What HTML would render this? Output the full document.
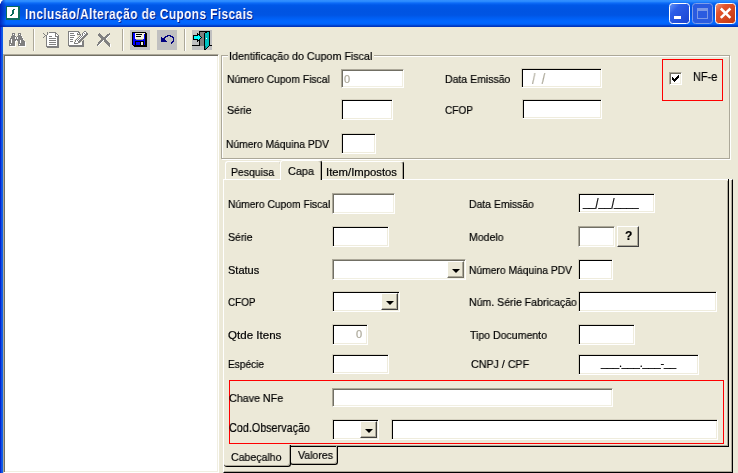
<!DOCTYPE html><html lang="pt-BR"><head><meta charset="utf-8"><title>Inclusão/Alteração de Cupons Fiscais</title><style>
*{box-sizing:border-box;margin:0;padding:0}
html,body{width:738px;height:473px;overflow:hidden;background:#ECE9D8}
body{position:relative;font-family:"Liberation Sans",sans-serif;font-size:11px;color:#000}
.abs,.l,.in,.dis,.btn,.cbb{position:absolute}
.l{will-change:transform;-webkit-text-stroke:0.2px currentColor;white-space:pre;line-height:14px;height:14px;transform-origin:0 0}
#tb{left:0;top:0;width:738px;height:27px;background:linear-gradient(to bottom,#3390ff 0%,#2c8cff 5%,#0d6cf8 11%,#0058e8 19%,#0054e2 40%,#0055e4 56%,#005ef2 66%,#0066ff 78%,#0066ff 86%,#005cf0 91%,#0040cc 95%,#0030b4 100%)}
#lb{left:0;top:27px;width:3px;height:446px;background:linear-gradient(to right,#0019cf 0,#0831d9 33%,#166aee 66%,#0855dd 100%)}
.in{background:#fff;border:1px solid;border-color:#d5d1c0 #fff #fff #d5d1c0;box-shadow:inset 1px 1px 0 #000,inset -1px -1px 0 #efecdd}
.dis{background:#fff;border:1px solid;border-color:#aca899 #fff #fff #aca899;box-shadow:inset 1px 1px 0 #716f64,inset -1px -1px 0 #f1efe2}
.cbb{background:#ECE9D8;border:1px solid;border-color:#fff #404040 #404040 #fff;box-shadow:inset -1px -1px 0 #aca899}
.cbb:after{content:"";position:absolute;left:50%;top:50%;margin:-1px 0 0 -4px;border:4px solid transparent;border-top-color:#000;border-bottom-width:0;width:0;height:0}
.tbtn{position:absolute;width:20px;height:20px;background:#c0c0c0}
.sep{position:absolute;top:29px;width:2px;height:22px;border-left:1px solid #aca899;border-right:1px solid #fff}
</style></head><body>
<div id="tb" class="abs"></div><div id="lb" class="abs"></div><div class="abs" style="left:0;top:0;width:6px;height:27px;background:linear-gradient(to right,rgba(0,20,170,.75),rgba(0,40,200,0))"></div>
<svg class="abs" style="left:0;top:0" width="4" height="4" viewBox="0 0 4 4" shape-rendering="crispEdges"><path d="M0 0h2v1h-1v2h-1z" fill="#fff"/><path d="M2 0h1v1h-1zM1 1h1v1h-1zM0 3h1v1h-1z" fill="#fff" opacity=".45"/></svg>
<svg class="abs" style="left:6px;top:6px" width="14" height="14" viewBox="0 0 14 14" shape-rendering="crispEdges"><rect width="14" height="14" fill="#0a6b5c"/><rect x="1" y="1" width="11" height="11" fill="#fff"/><path d="M7 3h2v1h-1v4h-1v1h-1v1h-2v-1h1v-1h1v-4h1z" fill="#0a6b5c"/></svg>
<svg class="abs" style="left:669px;top:3px" width="67" height="21" viewBox="0 0 67 21">
<defs><linearGradient id="gb" x1="0" y1="0" x2="1" y2="1"><stop offset="0" stop-color="#6a98f8"/><stop offset=".3" stop-color="#2c5ee8"/><stop offset="1" stop-color="#1a43d0"/></linearGradient>
<linearGradient id="gr" x1="0" y1="0" x2="1" y2="1"><stop offset="0" stop-color="#f09a80"/><stop offset=".3" stop-color="#e4532c"/><stop offset="1" stop-color="#c0360f"/></linearGradient></defs>
<rect x=".5" y=".5" width="20" height="20" rx="3" fill="url(#gb)" stroke="#fff"/>
<rect x="5" y="13" width="7" height="3" fill="#fff"/>
<rect x="23.5" y=".5" width="20" height="20" rx="3" fill="#2a5be0" stroke="#7f9fe8"/>
<rect x="28.5" y="6.5" width="10" height="9" fill="none" stroke="#7a98e6"/><rect x="28" y="5" width="11" height="3" fill="#7a98e6"/>
<rect x="46.5" y=".5" width="20" height="20" rx="3" fill="url(#gr)" stroke="#fff"/>
<path d="M51.8 5.5l9.600 9.400M61.400 5.500l-9.600 9.400" stroke="#fff" stroke-width="2.500"/>
</svg>
<div class="sep" style="left:33px"></div>
<div class="sep" style="left:122px"></div>
<div class="sep" style="left:184px"></div>
<div class="tbtn" style="left:130px;top:30px"></div><div class="tbtn" style="left:157px;top:30px"></div><div class="tbtn" style="left:192px;top:30px"></div>
<svg class="abs" style="left:9px;top:33px" width="17" height="14" viewBox="0 0 17 14" shape-rendering="crispEdges"><path fill="#808080" d="M3 0h3v1h-3zM9 0h3v1h-3zM3 1h1v1h-1zM5 1h1v1h-1zM9 1h1v1h-1zM11 1h1v1h-1zM3 2h3v1h-3zM9 2h3v1h-3zM2 3h5v1h-5zM8 3h5v1h-5zM2 4h4v1h-4zM7 4h1v1h-1zM9 4h4v1h-4zM1 5h5v1h-5zM7 5h1v1h-1zM9 5h5v1h-5zM1 6h1v1h-1zM3 6h11v1h-11zM0 7h2v1h-2zM3 7h4v1h-4zM8 7h3v1h-3zM12 7h3v1h-3zM0 8h2v1h-2zM3 8h3v1h-3zM9 8h2v1h-2zM12 8h4v1h-4zM0 9h2v1h-2zM3 9h3v1h-3zM9 9h2v1h-2zM12 9h4v1h-4zM0 10h6v1h-6zM9 10h7v1h-7zM0 11h1v1h-1zM2 11h4v1h-4zM9 11h1v1h-1zM11 11h5v1h-5zM0 12h6v1h-6zM9 12h7v1h-7z"/><path fill="#ffffff" d="M4 1h1v1h-1zM10 1h1v1h-1zM6 2h1v1h-1zM12 2h1v1h-1zM6 4h1v1h-1zM8 4h1v1h-1zM13 4h1v1h-1zM6 5h1v1h-1zM8 5h1v1h-1zM2 6h1v1h-1zM14 6h1v1h-1zM2 7h1v1h-1zM7 7h1v1h-1zM11 7h1v1h-1zM2 8h1v1h-1zM6 8h2v1h-2zM11 8h1v1h-1zM2 9h1v1h-1zM6 9h1v1h-1zM11 9h1v1h-1zM16 9h1v1h-1zM6 10h1v1h-1zM16 10h1v1h-1zM1 11h1v1h-1zM6 11h1v1h-1zM10 11h1v1h-1zM16 11h1v1h-1zM6 12h1v1h-1zM16 12h1v1h-1zM1 13h6v1h-6zM10 13h7v1h-7z"/></svg>
<svg class="abs" style="left:43px;top:32px" width="16" height="16" viewBox="0 0 16 16" shape-rendering="crispEdges"><path fill="#808080" d="M4 0h1v1h-1zM6 0h7v1h-7zM0 1h1v1h-1zM4 1h1v1h-1zM12 1h2v1h-2zM1 2h1v1h-1zM4 2h1v1h-1zM12 2h1v1h-1zM14 2h1v1h-1zM2 3h2v1h-2zM12 3h1v1h-1zM15 3h1v1h-1zM1 4h1v1h-1zM3 4h1v1h-1zM6 4h3v1h-3zM12 4h4v1h-4zM0 5h1v1h-1zM3 5h1v1h-1zM14 5h2v1h-2zM3 6h1v1h-1zM6 6h7v1h-7zM14 6h2v1h-2zM3 7h1v1h-1zM14 7h2v1h-2zM3 8h1v1h-1zM6 8h7v1h-7zM14 8h2v1h-2zM3 9h1v1h-1zM14 9h2v1h-2zM3 10h1v1h-1zM6 10h7v1h-7zM14 10h2v1h-2zM3 11h1v1h-1zM14 11h2v1h-2zM3 12h1v1h-1zM6 12h7v1h-7zM14 12h2v1h-2zM3 13h1v1h-1zM14 13h2v1h-2zM3 14h13v1h-13zM4 15h12v1h-12z"/><path fill="#ffffff" d="M6 1h6v1h-6zM5 2h7v1h-7zM13 2h1v1h-1zM4 3h8v1h-8zM13 3h2v1h-2zM4 4h2v1h-2zM9 4h3v1h-3zM4 5h10v1h-10zM4 6h2v1h-2zM13 6h1v1h-1zM4 7h10v1h-10zM4 8h2v1h-2zM13 8h1v1h-1zM4 9h10v1h-10zM4 10h2v1h-2zM13 10h1v1h-1zM4 11h10v1h-10zM4 12h2v1h-2zM13 12h1v1h-1zM4 13h10v1h-10z"/></svg>
<svg class="abs" style="left:68px;top:31px" width="21" height="16" viewBox="0 0 21 16" shape-rendering="crispEdges"><path fill="#808080" d="M0 0h11v1h-11zM16 0h2v1h-2zM0 1h1v1h-1zM10 1h2v1h-2zM15 1h1v1h-1zM18 1h1v1h-1zM0 2h1v1h-1zM2 2h4v1h-4zM9 2h1v1h-1zM11 2h1v1h-1zM14 2h1v1h-1zM16 2h1v1h-1zM18 2h2v1h-2zM0 3h1v1h-1zM9 3h4v1h-4zM14 3h1v1h-1zM17 3h3v1h-3zM0 4h1v1h-1zM2 4h5v1h-5zM12 4h1v1h-1zM14 4h1v1h-1zM16 4h3v1h-3zM0 5h1v1h-1zM11 5h1v1h-1zM13 5h1v1h-1zM15 5h3v1h-3zM0 6h1v1h-1zM2 6h4v1h-4zM10 6h1v1h-1zM12 6h1v1h-1zM14 6h3v1h-3zM0 7h1v1h-1zM9 7h1v1h-1zM11 7h1v1h-1zM13 7h3v1h-3zM0 8h1v1h-1zM2 8h3v1h-3zM8 8h1v1h-1zM10 8h1v1h-1zM12 8h3v1h-3zM0 9h1v1h-1zM7 9h1v1h-1zM9 9h1v1h-1zM11 9h3v1h-3zM15 9h1v1h-1zM0 10h1v1h-1zM2 10h3v1h-3zM7 10h1v1h-1zM10 10h3v1h-3zM14 10h2v1h-2zM0 11h1v1h-1zM6 11h1v1h-1zM10 11h2v1h-2zM14 11h2v1h-2zM0 12h1v1h-1zM6 12h4v1h-4zM14 12h2v1h-2zM0 13h1v1h-1zM14 13h2v1h-2zM0 14h16v1h-16zM1 15h15v1h-15z"/><path fill="#ffffff" d="M1 1h9v1h-9zM16 1h2v1h-2zM1 2h1v1h-1zM6 2h3v1h-3zM10 2h1v1h-1zM15 2h1v1h-1zM17 2h1v1h-1zM1 3h8v1h-8zM15 3h2v1h-2zM1 4h1v1h-1zM7 4h2v1h-2zM13 4h1v1h-1zM15 4h1v1h-1zM1 5h8v1h-8zM12 5h1v1h-1zM14 5h1v1h-1zM1 6h1v1h-1zM6 6h3v1h-3zM11 6h1v1h-1zM13 6h1v1h-1zM1 7h7v1h-7zM10 7h1v1h-1zM12 7h1v1h-1zM1 8h1v1h-1zM5 8h2v1h-2zM9 8h1v1h-1zM11 8h1v1h-1zM1 9h5v1h-5zM8 9h1v1h-1zM10 9h1v1h-1zM1 10h1v1h-1zM5 10h1v1h-1zM8 10h2v1h-2zM1 11h5v1h-5zM7 11h3v1h-3zM13 11h1v1h-1zM1 12h5v1h-5zM11 12h3v1h-3zM1 13h13v1h-13z"/></svg>
<svg class="abs" style="left:97px;top:33px" width="15" height="14" viewBox="0 0 15 14" shape-rendering="crispEdges"><path fill="#808080" d="M2 0h1v1h-1zM12 0h1v1h-1zM1 1h3v1h-3zM10 1h3v1h-3zM1 2h4v1h-4zM9 2h3v1h-3zM2 3h4v1h-4zM8 3h3v1h-3zM3 4h7v1h-7zM4 5h5v1h-5zM4 6h5v1h-5zM3 7h3v1h-3zM7 7h3v1h-3zM2 8h3v1h-3zM7 8h4v1h-4zM1 9h3v1h-3zM8 9h4v1h-4zM1 10h2v1h-2zM9 10h4v1h-4zM0 11h2v1h-2zM10 11h3v1h-3zM0 12h1v1h-1zM11 12h2v1h-2zM12 13h1v1h-1z"/><path fill="#ffffff" d="M12 2h1v1h-1zM11 3h1v1h-1zM10 4h1v1h-1zM9 5h1v1h-1zM6 7h1v1h-1zM5 8h1v1h-1zM4 9h1v1h-1zM3 10h1v1h-1zM2 11h1v1h-1zM13 11h1v1h-1zM1 12h1v1h-1zM13 12h1v1h-1zM13 13h1v1h-1z"/></svg>
<svg class="abs" style="left:132px;top:32px" width="15" height="15" viewBox="0 0 15 15" shape-rendering="crispEdges"><path fill="#000000" d="M0 0h14v1h-14zM0 1h1v1h-1zM13 1h2v1h-2zM0 2h1v1h-1zM4 2h6v1h-6zM13 2h2v1h-2zM0 3h1v1h-1zM13 3h2v1h-2zM0 4h1v1h-1zM4 4h5v1h-5zM13 4h2v1h-2zM0 5h1v1h-1zM13 5h2v1h-2zM0 6h1v1h-1zM13 6h2v1h-2zM0 7h1v1h-1zM13 7h2v1h-2zM0 8h1v1h-1zM13 8h2v1h-2zM0 9h1v1h-1zM3 9h9v1h-9zM13 9h2v1h-2zM0 10h1v1h-1zM3 10h1v1h-1zM8 10h1v1h-1zM11 10h1v1h-1zM13 10h2v1h-2zM0 11h1v1h-1zM3 11h1v1h-1zM8 11h1v1h-1zM11 11h1v1h-1zM13 11h2v1h-2zM0 12h1v1h-1zM3 12h1v1h-1zM8 12h1v1h-1zM11 12h1v1h-1zM13 12h2v1h-2zM1 13h14v1h-14zM2 14h13v1h-13z"/><path fill="#0000ff" d="M1 1h2v1h-2zM1 2h2v1h-2zM12 2h1v1h-1zM1 3h2v1h-2zM12 3h1v1h-1zM1 4h2v1h-2zM12 4h1v1h-1zM1 5h2v1h-2zM12 5h1v1h-1zM1 6h2v1h-2zM12 6h1v1h-1zM1 7h3v1h-3zM11 7h2v1h-2zM1 8h12v1h-12zM1 9h2v1h-2zM12 9h1v1h-1zM1 10h2v1h-2zM4 10h4v1h-4zM12 10h1v1h-1zM1 11h2v1h-2zM4 11h4v1h-4zM12 11h1v1h-1zM1 12h2v1h-2zM4 12h4v1h-4zM12 12h1v1h-1z"/><path fill="#f4f2e4" d="M3 1h9v1h-9zM3 2h1v1h-1zM10 2h2v1h-2zM3 3h9v1h-9zM3 4h1v1h-1zM9 4h3v1h-3zM3 5h9v1h-9zM3 6h9v1h-9z"/><path fill="#ffffff" d="M12 1h1v1h-1z"/><path fill="#a0a0a0" d="M4 7h7v1h-7z"/><path fill="#e8e8e8" d="M9 10h2v1h-2zM9 11h2v1h-2zM9 12h2v1h-2z"/></svg>
<svg class="abs" style="left:161px;top:35px" width="13" height="9" viewBox="0 0 13 9" shape-rendering="crispEdges"><path fill="#000080" d="M6 0h4v1h-4zM4 1h3v1h-3zM9 1h3v1h-3zM0 2h1v1h-1zM3 2h2v1h-2zM11 2h2v1h-2zM0 3h4v1h-4zM12 3h1v1h-1zM0 4h4v1h-4zM12 4h1v1h-1zM0 5h5v1h-5zM12 5h1v1h-1zM0 6h6v1h-6zM11 6h2v1h-2zM10 7h2v1h-2zM10 8h1v1h-1z"/></svg>
<svg class="abs" style="left:192px;top:30px" width="20" height="20" viewBox="0 0 20 20" shape-rendering="crispEdges"><path fill="#000000" d="M7 1h11v1h-11zM7 2h1v1h-1zM13 2h2v1h-2zM17 2h1v1h-1zM5 3h1v1h-1zM7 3h1v1h-1zM12 3h1v1h-1zM17 3h1v1h-1zM5 4h3v1h-3zM12 4h1v1h-1zM17 4h1v1h-1zM1 5h5v1h-5zM7 5h1v1h-1zM12 5h1v1h-1zM17 5h1v1h-1zM1 6h1v1h-1zM8 6h1v1h-1zM12 6h1v1h-1zM17 6h1v1h-1zM1 7h1v1h-1zM9 7h1v1h-1zM12 7h1v1h-1zM17 7h1v1h-1zM1 8h1v1h-1zM8 8h1v1h-1zM12 8h1v1h-1zM17 8h1v1h-1zM1 9h5v1h-5zM7 9h1v1h-1zM12 9h1v1h-1zM17 9h1v1h-1zM5 10h3v1h-3zM12 10h1v1h-1zM17 10h1v1h-1zM5 11h1v1h-1zM7 11h1v1h-1zM12 11h1v1h-1zM17 11h1v1h-1zM7 12h1v1h-1zM12 12h1v1h-1zM17 12h1v1h-1zM7 13h1v1h-1zM12 13h1v1h-1zM17 13h1v1h-1zM7 14h1v1h-1zM12 14h1v1h-1zM17 14h1v1h-1zM0 15h8v1h-8zM12 15h1v1h-1zM17 15h3v1h-3zM12 16h1v1h-1zM16 16h1v1h-1zM12 17h1v1h-1zM15 17h1v1h-1zM12 18h1v1h-1zM14 18h1v1h-1zM12 19h2v1h-2z"/><path fill="#808080" d="M8 2h5v1h-5zM8 3h4v1h-4zM8 4h4v1h-4zM8 5h4v1h-4zM9 6h3v1h-3zM10 7h2v1h-2zM9 8h3v1h-3zM8 9h4v1h-4zM8 10h4v1h-4zM8 11h4v1h-4zM8 12h4v1h-4zM8 13h4v1h-4zM8 14h4v1h-4zM8 15h4v1h-4z"/><path fill="#00c0c0" d="M15 2h2v1h-2zM13 3h4v1h-4zM13 4h4v1h-4zM13 5h4v1h-4zM13 6h4v1h-4zM13 7h4v1h-4zM13 8h1v1h-1zM15 8h2v1h-2zM13 9h4v1h-4zM13 10h4v1h-4zM13 11h4v1h-4zM13 12h4v1h-4zM13 13h4v1h-4zM13 14h4v1h-4zM13 15h4v1h-4zM14 16h2v1h-2zM14 17h1v1h-1z"/><path fill="#00ffff" d="M6 5h1v1h-1zM2 6h6v1h-6zM2 7h7v1h-7zM2 8h6v1h-6zM6 9h1v1h-1z"/><path fill="#ffffff" d="M14 8h1v1h-1z"/><path fill="#008080" d="M13 16h1v1h-1zM13 17h1v1h-1zM13 18h1v1h-1z"/></svg>
<div class="abs" style="left:3px;top:54px;width:216px;height:419px;background:#fff;border:1px solid;border-color:#aca899 #fff #fff #aca899;box-shadow:inset 1px 1px 0 #716f64,inset -1px -1px 0 #f1efe2"></div>
<div class="abs" style="left:222px;top:56px;width:509px;height:104px;border:1px solid #fff;"></div>
<div class="abs" style="left:221px;top:55px;width:509px;height:104px;border:1px solid #aca899"></div>
<div class="abs" style="left:228px;top:52px;width:146px;height:10px;background:#ECE9D8"></div>
<div class="dis" style="left:341px;top:69px;width:63px;height:19px"></div>
<div class="in" style="left:341px;top:99px;width:52px;height:21px"></div>
<div class="in" style="left:341px;top:133px;width:35px;height:21px"></div>
<div class="in" style="left:521px;top:68px;width:81px;height:20px"></div>
<div class="in" style="left:522px;top:99px;width:80px;height:20px"></div>
<div class="abs" style="left:662px;top:59px;width:61px;height:42px;border:1px solid #f00"></div>
<div class="dis" style="left:669px;top:72px;width:13px;height:13px"><svg width="7" height="7" viewBox="0 0 7 7" style="position:absolute;left:2px;top:2px" shape-rendering="crispEdges"><path d="M6 0h1v3h-1v1h-1v1h-1v1h-1v1h-1v-1h-1v-1h-1v-3h1v1h1v1h1v-1h1v-1h1v-1h1z" fill="#000"/></svg></div>
<div class="abs" style="left:223px;top:179px;width:510px;height:294px;border:1px solid;border-color:#fff #000 #000 #fff;box-shadow:inset -1px -1px 0 #aca899"></div>
<div class="abs" style="left:224px;top:180px;width:505px;height:267px;border:1px solid;border-color:transparent #000 #000 transparent;box-shadow:inset -1px -1px 0 #aca899"></div>
<div class="abs" style="left:728px;top:179px;width:1px;height:2px;background:#000"></div>
<div class="abs" style="left:225px;top:161px;width:56px;height:18px;border:1px solid;border-color:#fff #aca899 transparent #fff;border-bottom:0;border-radius:3px 3px 0 0"></div>
<div class="abs" style="left:322px;top:161px;width:82px;height:18px;border:1px solid;border-color:#fff #000 transparent transparent;border-bottom:0;border-left:0;border-radius:0 3px 0 0;box-shadow:inset -1px 0 0 #aca899"></div>
<div class="abs" style="left:280px;top:160px;width:42px;height:20px;background:#ECE9D8;border:1px solid;border-color:#fff #000 #ECE9D8 #fff;border-bottom:0;border-radius:3px 3px 0 0;box-shadow:inset -1px 0 0 #aca899"></div>
<div class="abs" style="left:290px;top:446px;width:48px;height:19px;border:1px solid;border-color:transparent #000 #000 #000;border-top:0;border-radius:0 0 3px 3px;box-shadow:inset -1px -1px 0 #aca899"></div>
<div class="abs" style="left:224px;top:445px;width:67px;height:22px;background:#ECE9D8;border:1px solid;border-color:transparent #000 #000 transparent;border-top:0;border-left:0;border-radius:0 0 3px 3px;box-shadow:inset -1px -1px 0 #aca899"></div>
<div class="dis" style="left:332px;top:193px;width:63px;height:21px"></div>
<div class="in" style="left:332px;top:226px;width:57px;height:21px"></div>
<div class="dis" style="left:332px;top:259px;width:134px;height:21px"><div class="cbb" style="right:1px;top:1px;width:17px;height:17px;border-color:#fff #716f64 #716f64 #fff"></div></div>
<div class="in" style="left:332px;top:291px;width:68px;height:21px"><div class="cbb" style="right:1px;top:1px;width:17px;height:17px"></div></div>
<div class="in" style="left:332px;top:324px;width:36px;height:21px"></div>
<div class="in" style="left:332px;top:354px;width:57px;height:20px"></div>
<div class="dis" style="left:332px;top:388px;width:281px;height:19px"></div>
<div class="in" style="left:332px;top:419px;width:47px;height:21px"><div class="cbb" style="right:1px;top:1px;width:17px;height:17px"></div></div>
<div class="in" style="left:391px;top:419px;width:327px;height:21px"></div>
<div class="in" style="left:578px;top:193px;width:77px;height:20px"></div>
<div class="dis" style="left:578px;top:226px;width:37px;height:21px"></div>
<div class="abs" style="left:617px;top:226px;width:22px;height:21px;border:1px solid;border-color:#fff #404040 #404040 #fff;box-shadow:inset -1px -1px 0 #aca899"></div>
<div class="in" style="left:578px;top:259px;width:35px;height:21px"></div>
<div class="in" style="left:578px;top:291px;width:139px;height:21px"></div>
<div class="in" style="left:578px;top:324px;width:57px;height:21px"></div>
<div class="in" style="left:578px;top:354px;width:121px;height:21px"></div>
<div class="abs" style="left:229px;top:380px;width:495px;height:64px;border:1px solid #f00"></div>
<span class="l" style="left:25.1547px;top:4.600000000000001px;transform:scaleX(0.8453);-webkit-text-stroke:0;color:#fff;font-weight:700;font-size:14px;line-height:18px;height:18px;letter-spacing:0.5px;text-shadow:1px 1px 0 #0a1883;">Inclusão/Alteração de Cupons Fiscais</span>
<span class="l" style="left:229.03px;top:49px;transform:scaleX(0.9726);">Identificação do Cupom Fiscal</span>
<span class="l" style="left:227.06px;top:72px;transform:scaleX(0.9398);">Número Cupom Fiscal</span>
<span class="l" style="left:227.04px;top:103px;transform:scaleX(0.9583);">Série</span>
<span class="l" style="left:226.06px;top:137px;transform:scaleX(0.9358);">Número Máquina PDV</span>
<span class="l" style="left:444.54px;top:72px;transform:scaleX(0.9552);">Data Emissão</span>
<span class="l" style="left:445.09px;top:103px;transform:scaleX(0.9138);">CFOP</span>
<span class="l" style="left:692.79px;top:69.5px;transform:scaleX(0.9120);font-size:12px;">NF-e</span>
<span class="l" style="left:230.75px;top:165px;transform:scaleX(0.9500);">Pesquisa</span>
<span class="l" style="left:287.72px;top:164px;transform:scaleX(0.9840);">Capa</span>
<span class="l" style="left:325.67px;top:165px;transform:scaleX(1.0279);">Item/Impostos</span>
<span class="l" style="left:228.06px;top:197px;transform:scaleX(0.9352);">Número Cupom Fiscal</span>
<span class="l" style="left:228.04px;top:230px;transform:scaleX(0.9583);">Série</span>
<span class="l" style="left:228.0px;top:263px;transform:scaleX(1.0000);">Status</span>
<span class="l" style="left:228.1px;top:295px;transform:scaleX(0.8966);">CFOP</span>
<span class="l" style="left:227.95px;top:328px;transform:scaleX(1.0510);">Qtde Itens</span>
<span class="l" style="left:228.08px;top:357px;transform:scaleX(0.9211);">Espécie</span>
<span class="l" style="left:228.73px;top:391px;transform:scaleX(0.9741);">Chave NFe</span>
<span class="l" style="left:228.84px;top:421px;transform:scaleX(0.8630);font-size:12.5px;">Cod.Observação</span>
<span class="l" style="left:468.55px;top:197px;transform:scaleX(0.9478);">Data Emissão</span>
<span class="l" style="left:468.54px;top:230px;transform:scaleX(0.9571);">Modelo</span>
<span class="l" style="left:468.56px;top:263px;transform:scaleX(0.9358);">Número Máquina PDV</span>
<span class="l" style="left:468.54px;top:295px;transform:scaleX(0.9595);">Núm. Série Fabricação</span>
<span class="l" style="left:469.8px;top:328px;transform:scaleX(0.9587);">Tipo Documento</span>
<span class="l" style="left:471.23px;top:357px;transform:scaleX(0.9695);">CNPJ / CPF</span>
<span class="l" style="left:231.04px;top:450px;transform:scaleX(0.9608);">Cabeçalho</span>
<span class="l" style="left:298.0px;top:448px;transform:scaleX(0.9583);">Valores</span>
<span class="l" style="left:344px;top:72px;color:#aca899">0</span>
<span class="l" style="left:532.3px;top:71.5px;color:#aca899;letter-spacing:1.9px;font-size:14px;transform:scaleX(.85)">/ /</span>
<span class="l" style="left:356.3px;top:327px;color:#aca899">0</span>
<span class="l" style="left:583px;top:195px;letter-spacing:0px">__<span style="font-size:14px;position:relative;top:1.5px;display:inline-block;transform:scaleX(.85);margin:0 -0.3px">/</span>__<span style="font-size:14px;position:relative;top:1.5px;display:inline-block;transform:scaleX(.85);margin:0 -0.3px">/</span>____</span>
<span class="l" style="left:601px;top:356px;letter-spacing:-0.15px">___.___.___-__</span>
<span class="l" style="left:624.5px;top:229px;font-weight:700;font-size:12px">?</span>
</body></html>
